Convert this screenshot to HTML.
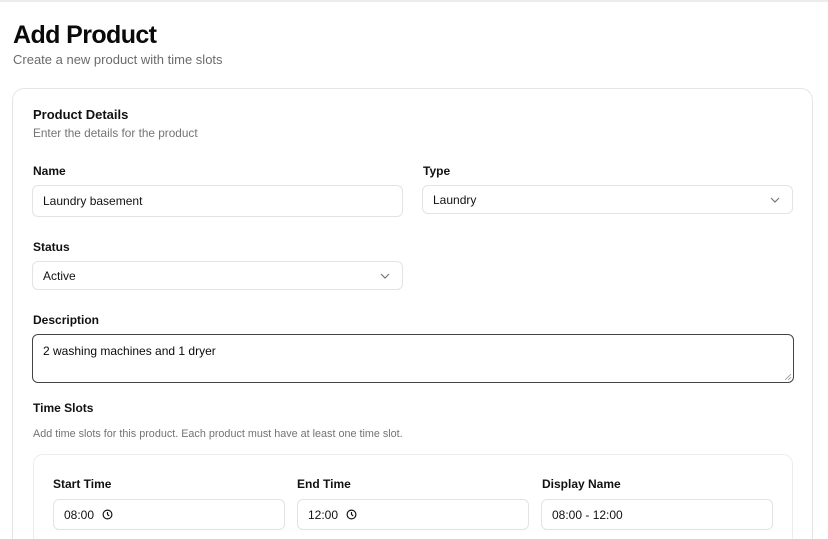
<!DOCTYPE html>
<html><head><meta charset="utf-8"><style>
*{box-sizing:border-box;margin:0;padding:0}
html,body{width:828px;height:539px;overflow:hidden}
body{background:#fff;font-family:"Liberation Sans",Arial,sans-serif;color:#0a0a0a;position:relative}
.a{position:absolute}
.topline{left:0;top:0;width:828px;height:2px;background:#ececec}
h1{position:absolute;left:13px;top:21px;font-size:25px;font-weight:bold;letter-spacing:-0.6px}
.sub{left:13px;top:52px;font-size:13px;color:#6b6b6b}
.card{left:12px;top:88px;width:801px;height:451px;border:1px solid #e6e6e6;border-bottom:none;border-radius:12px 12px 0 0}
.lbl{font-size:12px;font-weight:bold;color:#111}
.muted{font-size:11px;color:#737373}
.inp{border:1px solid #e3e3e3;border-radius:6px;font-size:12px;color:#111;padding-left:10px;display:flex;align-items:center;background:#fff}
.chev{position:absolute;right:12px;top:50%;margin-top:-4px}
.inner{left:33px;top:454px;width:760px;height:85px;border:1px solid #ececec;border-bottom:none;border-radius:10px 10px 0 0;background:#fff}
</style></head><body>
<div class="a topline"></div>
<h1>Add Product</h1>
<div class="a sub">Create a new product with time slots</div>
<div class="a card"></div>
<div class="a lbl" style="left:33px;top:107px;font-size:13px">Product Details</div>
<div class="a muted" style="left:33px;top:126px;font-size:11.8px">Enter the details for the product</div>

<div class="a lbl" style="left:33px;top:164px">Name</div>
<div class="a inp" style="left:32px;top:185px;width:371px;height:32px">Laundry basement</div>

<div class="a lbl" style="left:423px;top:164px">Type</div>
<div class="a inp" style="left:422px;top:185px;width:371px;height:29px">Laundry
<svg class="chev" width="10" height="8" viewBox="0 0 10 8"><path d="M1 2l4 4 4-4" fill="none" stroke="#777" stroke-width="1.2"/></svg></div>

<div class="a lbl" style="left:33px;top:240px">Status</div>
<div class="a inp" style="left:32px;top:261px;width:371px;height:29px">Active
<svg class="chev" width="10" height="8" viewBox="0 0 10 8"><path d="M1 2l4 4 4-4" fill="none" stroke="#777" stroke-width="1.2"/></svg></div>

<div class="a lbl" style="left:33px;top:313px">Description</div>
<div class="a" style="left:32px;top:334px;width:762px;height:49px;border:1.5px solid #444;border-radius:6px;font-size:12px;padding:9px 10px">2 washing machines and 1 dryer
<svg style="position:absolute;right:2px;bottom:2px" width="6" height="6" viewBox="0 0 6 6"><path d="M0 6L6 0M3 6L6 3" stroke="#999" stroke-width="0.8"/></svg></div>

<div class="a lbl" style="left:33px;top:401px">Time Slots</div>
<div class="a muted" style="left:33px;top:428px;font-size:10.8px">Add time slots for this product. Each product must have at least one time slot.</div>

<div class="a inner"></div>
<div class="a lbl" style="left:53px;top:477px">Start Time</div>
<div class="a lbl" style="left:297px;top:477px">End Time</div>
<div class="a lbl" style="left:542px;top:477px">Display Name</div>
<div class="a inp" style="left:53px;top:499px;width:232px;height:31px">08:00
<svg style="margin-left:8px" width="11" height="11" viewBox="0 0 12 12"><circle cx="6" cy="6" r="4.8" fill="none" stroke="#111" stroke-width="1.3"/><path d="M6 3.3V6l1.8 1.5" fill="none" stroke="#111" stroke-width="1.3"/></svg></div>
<div class="a inp" style="left:297px;top:499px;width:232px;height:31px">12:00
<svg style="margin-left:8px" width="11" height="11" viewBox="0 0 12 12"><circle cx="6" cy="6" r="4.8" fill="none" stroke="#111" stroke-width="1.3"/><path d="M6 3.3V6l1.8 1.5" fill="none" stroke="#111" stroke-width="1.3"/></svg></div>
<div class="a inp" style="left:541px;top:499px;width:232px;height:31px">08:00 - 12:00</div>
</body></html>
